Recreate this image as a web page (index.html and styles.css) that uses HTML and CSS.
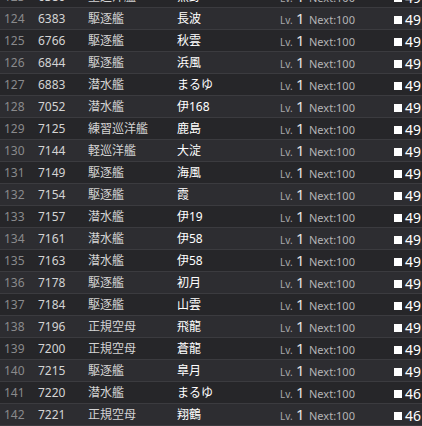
FILE: index.html
```html
<!DOCTYPE html>
<html lang="ja">
<head>
    <meta charset="UTF-8">
    <title>艦娘一覧</title>
    <link rel="stylesheet" href="styles.css">
</head>
<body>
    <div class="ship-list">
        <div class="row"><span class="no">123</span><span class="id">6380</span><span class="type">重巡洋艦</span><span class="name">熊野</span><span class="lv"><span class="lv-label">Lv.</span><span class="lv-num">1</span><span class="next">Next:100</span></span><span class="cond"><i class="sq"></i>49</span></div>
        <div class="row"><span class="no">124</span><span class="id">6383</span><span class="type">駆逐艦</span><span class="name">長波</span><span class="lv"><span class="lv-label">Lv.</span><span class="lv-num">1</span><span class="next">Next:100</span></span><span class="cond"><i class="sq"></i>49</span></div>
        <div class="row"><span class="no">125</span><span class="id">6766</span><span class="type">駆逐艦</span><span class="name">秋雲</span><span class="lv"><span class="lv-label">Lv.</span><span class="lv-num">1</span><span class="next">Next:100</span></span><span class="cond"><i class="sq"></i>49</span></div>
        <div class="row"><span class="no">126</span><span class="id">6844</span><span class="type">駆逐艦</span><span class="name">浜風</span><span class="lv"><span class="lv-label">Lv.</span><span class="lv-num">1</span><span class="next">Next:100</span></span><span class="cond"><i class="sq"></i>49</span></div>
        <div class="row"><span class="no">127</span><span class="id">6883</span><span class="type">潜水艦</span><span class="name">まるゆ</span><span class="lv"><span class="lv-label">Lv.</span><span class="lv-num">1</span><span class="next">Next:100</span></span><span class="cond"><i class="sq"></i>49</span></div>
        <div class="row"><span class="no">128</span><span class="id">7052</span><span class="type">潜水艦</span><span class="name">伊168</span><span class="lv"><span class="lv-label">Lv.</span><span class="lv-num">1</span><span class="next">Next:100</span></span><span class="cond"><i class="sq"></i>49</span></div>
        <div class="row"><span class="no">129</span><span class="id">7125</span><span class="type">練習巡洋艦</span><span class="name">鹿島</span><span class="lv"><span class="lv-label">Lv.</span><span class="lv-num">1</span><span class="next">Next:100</span></span><span class="cond"><i class="sq"></i>49</span></div>
        <div class="row"><span class="no">130</span><span class="id">7144</span><span class="type">軽巡洋艦</span><span class="name">大淀</span><span class="lv"><span class="lv-label">Lv.</span><span class="lv-num">1</span><span class="next">Next:100</span></span><span class="cond"><i class="sq"></i>49</span></div>
        <div class="row"><span class="no">131</span><span class="id">7149</span><span class="type">駆逐艦</span><span class="name">海風</span><span class="lv"><span class="lv-label">Lv.</span><span class="lv-num">1</span><span class="next">Next:100</span></span><span class="cond"><i class="sq"></i>49</span></div>
        <div class="row"><span class="no">132</span><span class="id">7154</span><span class="type">駆逐艦</span><span class="name">霞</span><span class="lv"><span class="lv-label">Lv.</span><span class="lv-num">1</span><span class="next">Next:100</span></span><span class="cond"><i class="sq"></i>49</span></div>
        <div class="row"><span class="no">133</span><span class="id">7157</span><span class="type">潜水艦</span><span class="name">伊19</span><span class="lv"><span class="lv-label">Lv.</span><span class="lv-num">1</span><span class="next">Next:100</span></span><span class="cond"><i class="sq"></i>49</span></div>
        <div class="row"><span class="no">134</span><span class="id">7161</span><span class="type">潜水艦</span><span class="name">伊58</span><span class="lv"><span class="lv-label">Lv.</span><span class="lv-num">1</span><span class="next">Next:100</span></span><span class="cond"><i class="sq"></i>49</span></div>
        <div class="row"><span class="no">135</span><span class="id">7163</span><span class="type">潜水艦</span><span class="name">伊58</span><span class="lv"><span class="lv-label">Lv.</span><span class="lv-num">1</span><span class="next">Next:100</span></span><span class="cond"><i class="sq"></i>49</span></div>
        <div class="row"><span class="no">136</span><span class="id">7178</span><span class="type">駆逐艦</span><span class="name">初月</span><span class="lv"><span class="lv-label">Lv.</span><span class="lv-num">1</span><span class="next">Next:100</span></span><span class="cond"><i class="sq"></i>49</span></div>
        <div class="row"><span class="no">137</span><span class="id">7184</span><span class="type">駆逐艦</span><span class="name">山雲</span><span class="lv"><span class="lv-label">Lv.</span><span class="lv-num">1</span><span class="next">Next:100</span></span><span class="cond"><i class="sq"></i>49</span></div>
        <div class="row"><span class="no">138</span><span class="id">7196</span><span class="type">正規空母</span><span class="name">飛龍</span><span class="lv"><span class="lv-label">Lv.</span><span class="lv-num">1</span><span class="next">Next:100</span></span><span class="cond"><i class="sq"></i>49</span></div>
        <div class="row"><span class="no">139</span><span class="id">7200</span><span class="type">正規空母</span><span class="name">蒼龍</span><span class="lv"><span class="lv-label">Lv.</span><span class="lv-num">1</span><span class="next">Next:100</span></span><span class="cond"><i class="sq"></i>49</span></div>
        <div class="row"><span class="no">140</span><span class="id">7215</span><span class="type">駆逐艦</span><span class="name">皐月</span><span class="lv"><span class="lv-label">Lv.</span><span class="lv-num">1</span><span class="next">Next:100</span></span><span class="cond"><i class="sq"></i>49</span></div>
        <div class="row"><span class="no">141</span><span class="id">7220</span><span class="type">潜水艦</span><span class="name">まるゆ</span><span class="lv"><span class="lv-label">Lv.</span><span class="lv-num">1</span><span class="next">Next:100</span></span><span class="cond"><i class="sq"></i>46</span></div>
        <div class="row"><span class="no">142</span><span class="id">7221</span><span class="type">正規空母</span><span class="name">翔鶴</span><span class="lv"><span class="lv-label">Lv.</span><span class="lv-num">1</span><span class="next">Next:100</span></span><span class="cond"><i class="sq"></i>46</span></div>
    </div>
</body>
</html>
```

FILE: styles.css
```css
html, body {
    margin: 0;
    padding: 0;
    background-color: #27272a;
    overflow: hidden;
}
body {
    font-family: "Noto Sans", "Noto Sans CJK JP", sans-serif;
    font-size: 12px;
    color: #d2d2d2;
}
/* list is scrolled: row 123 is cut off at the top */
.ship-list {
    margin-top: -14px;
}
.row {
    display: grid;
    grid-template-columns: 38px 50px 89px 103px 114px 28px;
    height: 21px;
    line-height: 21px;
    border-bottom: 1px solid #3b3b3f;
    background-color: #2d2d31;
    white-space: nowrap;
}
.row:nth-child(odd) {
    background-color: #262629;
}
.no {
    padding-left: 4px;
    color: #8a8a8c;
}
.id, .type {
    color: #d4d4d4;
}
.name {
    color: #ffffff;
}
.lv {
    display: flex;
    align-items: baseline;
}
.lv-label {
    width: 16px;
    font-size: 10px;
    color: #a8a8aa;
}
.lv-num {
    width: 13px;
    font-size: 15px;
    color: #e4e4e4;
}
.next {
    font-size: 11px;
    color: #b4b4b6;
}
.cond {
    display: flex;
    align-items: center;
    font-size: 14px;
    color: #ffffff;
}
.sq {
    width: 8px;
    height: 8px;
    margin-right: 3px;
    background-color: #ffffff;
}
```
